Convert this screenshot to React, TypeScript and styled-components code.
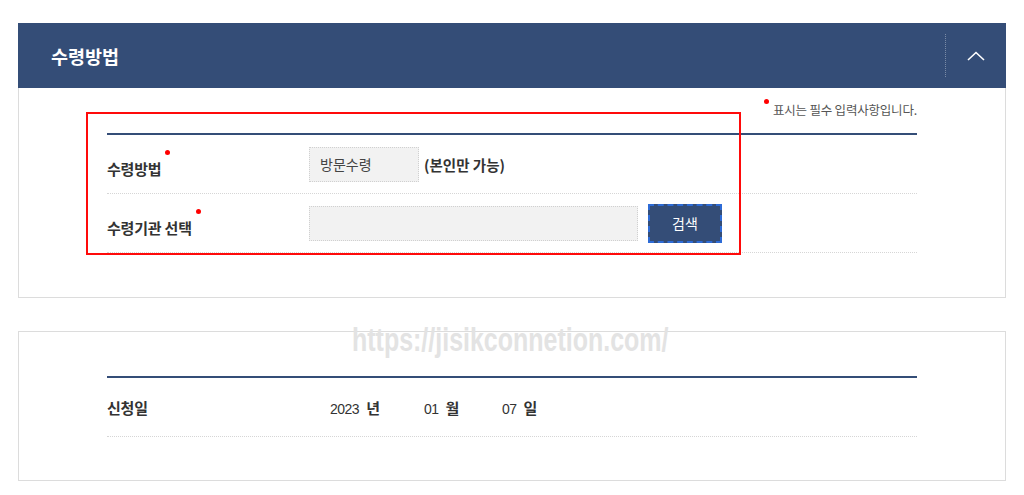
import React from 'react';
import styled, { createGlobalStyle } from 'styled-components';

const navy = '#344d77';
const kr = `"Noto Sans CJK KR", "Noto Sans", sans-serif`;

const GlobalStyle = createGlobalStyle`
    body {
        margin: 0;
        background: #fff;
        font-family: ${kr};
        color: #333;
    }
`;

const Page = styled.div`
    position: relative;
    display: flex;
    flex-direction: column;
    gap: 33px;
    width: 988px;
    padding: 23px 0 0 18px;
`;

const Panel = styled.section`
    border: 1px solid #dcdcdc;
    background: #fff;
`;

const Header = styled.div`
    display: flex;
    align-items: center;
    height: 65px;
    margin: -1px -1px 0;
    background: ${navy};
`;

const Title = styled.h2`
    flex: 1;
    margin: 0;
    padding-left: 33px;
    font-size: 18.5px;
    font-weight: 700;
    color: #fff;
`;

const Toggle = styled.button`
    display: flex;
    align-items: center;
    justify-content: center;
    width: 61px;
    height: 43px;
    padding: 0;
    border: 0;
    border-left: 1px dotted rgba(255, 255, 255, 0.35);
    background: transparent;
    cursor: pointer;
`;

const Body = styled.div`
    position: relative;
    padding: ${({ top, bottom }: { top: number; bottom: number }) =>
        `${top}px 88px ${bottom}px`};
`;

const Note = styled.p`
    display: flex;
    justify-content: flex-end;
    margin: 0 0 13px;
    font-size: 12.5px;
    line-height: 20px;
    letter-spacing: -0.2px;
    color: #555;
`;

const Dot = styled.span`
    display: inline-block;
    width: 5px;
    height: 5px;
    border-radius: 50%;
    background: #f00;
`;

const NoteDot = styled(Dot)`
    margin: -1px 4px 0 0;
`;

const LabelDot = styled(Dot)`
    margin-left: 4px;
    vertical-align: 20px;
`;

const Table = styled.div`
    border-top: 2px solid ${navy};
`;

const Row = styled.div`
    display: flex;
    align-items: center;
    height: 58px;
    border-bottom: 1px dotted #d6d6d6;
`;

const Label = styled.div`
    width: ${({ width }: { width: number }) => `${width}px`};
    flex-shrink: 0;
    font-size: 15px;
    font-weight: 700;
    color: #333;
    letter-spacing: -0.2px;
`;

const Field = styled.div`
    display: flex;
    align-items: center;
    gap: 10px;
`;

const Input = styled.div`
    box-sizing: border-box;
    width: ${({ width }: { width: number }) => `${width}px`};
    height: 35px;
    padding: 0 10px;
    border: 1px dotted #d0d0d0;
    background: #f2f2f2;
    font-size: 14px;
    line-height: 33px;
    color: #444;
`;

const Hint = styled.span`
    margin-left: -5px;
    font-size: 14.5px;
    font-weight: 700;
`;

const SearchButton = styled.button`
    box-sizing: border-box;
    width: 74px;
    height: 39px;
    border: 2px dashed #2d6bd6;
    background: ${navy};
    color: #fff;
    font-family: ${kr};
    font-size: 14px;
`;

const Marker = styled.div`
    position: absolute;
    left: 67px;
    top: 24px;
    width: 655px;
    height: 143px;
    box-sizing: border-box;
    border: 2px solid #ff0a0a;
    pointer-events: none;
`;

const DateValues = styled.div`
    display: grid;
    grid-template-columns: 94px 78px auto;
    align-items: center;
    font-family: "Liberation Sans", ${kr};
    font-size: 14px;
    letter-spacing: -0.5px;
    color: #333;
`;

const Unit = styled.b`
    margin-left: 7px;
    font-family: ${kr};
    font-size: 15px;
    letter-spacing: 0;
`;

const Watermark = styled.div`
    position: absolute;
    left: 352px;
    top: 321px;
    font-family: "Liberation Sans", sans-serif;
    font-size: 33px;
    font-weight: 700;
    color: #e3e3e3;
    transform: scaleX(0.757);
    transform-origin: left center;
    pointer-events: none;
`;

const Chevron = () => (
    <svg width='18' height='10' viewBox='0 0 18 10'>
        <path d='M1 9 L9 1.5 L17 9' fill='none' stroke='#fff' strokeWidth='1.6' />
    </svg>
);

const DatePart = ({ value, unit }: { value: string; unit: string }) => (
    <span>
        {value}
        <Unit>{unit}</Unit>
    </span>
);

export default function App() {
    return (
        <>
            <GlobalStyle />
            <Page>
                <Panel>
                    <Header>
                        <Title>수령방법</Title>
                        <Toggle aria-label='접기'>
                            <Chevron />
                        </Toggle>
                    </Header>
                    <Body top={12} bottom={44}>
                        <Note>
                            <NoteDot />
                            표시는 필수 입력사항입니다.
                        </Note>
                        <Table>
                            <Row>
                                <Label width={202}>
                                    수령방법
                                    <LabelDot />
                                </Label>
                                <Field>
                                    <Input width={110}>방문수령</Input>
                                    <Hint>(본인만 가능)</Hint>
                                </Field>
                            </Row>
                            <Row>
                                <Label width={202}>
                                    수령기관 선택
                                    <LabelDot />
                                </Label>
                                <Field>
                                    <Input width={329} />
                                    <SearchButton>검색</SearchButton>
                                </Field>
                            </Row>
                        </Table>
                        <Marker />
                    </Body>
                </Panel>
                <Panel>
                    <Body top={44} bottom={43}>
                        <Table>
                            <Row>
                                <Label width={223}>신청일</Label>
                                <DateValues>
                                    <DatePart value='2023' unit='년' />
                                    <DatePart value='01' unit='월' />
                                    <DatePart value='07' unit='일' />
                                </DateValues>
                            </Row>
                        </Table>
                    </Body>
                </Panel>
                <Watermark>https://jisikconnetion.com/</Watermark>
            </Page>
        </>
    );
}
